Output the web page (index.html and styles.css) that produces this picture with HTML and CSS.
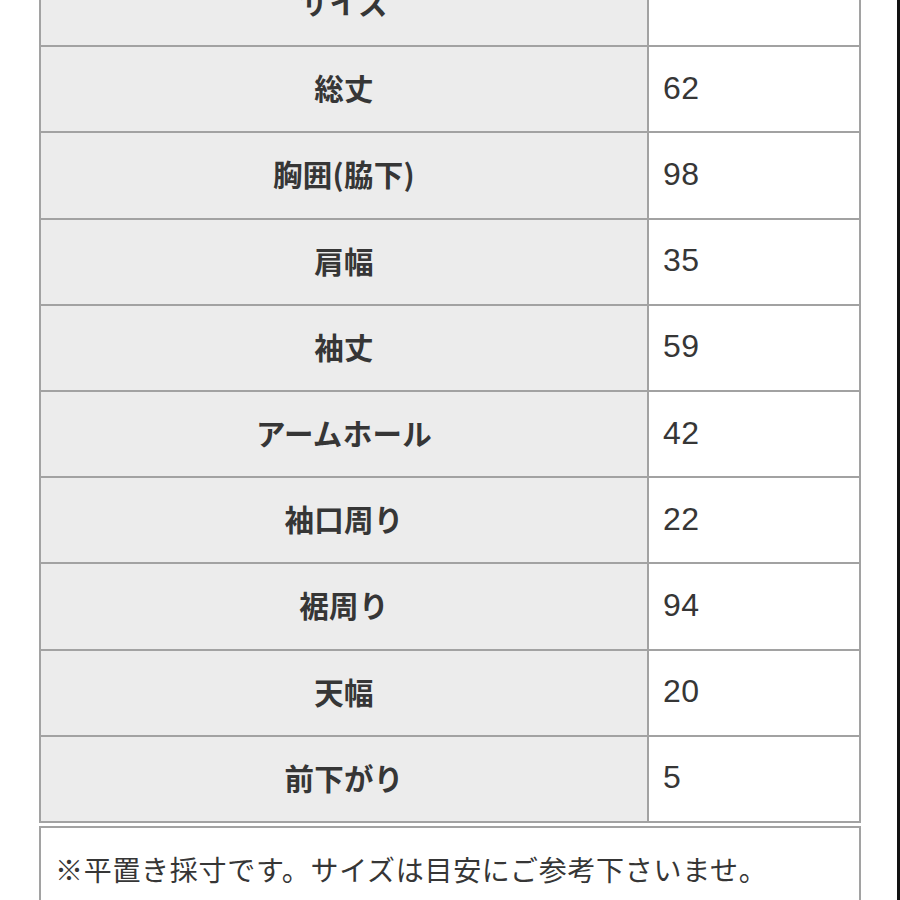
FILE: index.html
```html
<!DOCTYPE html>
<html lang="ja">
<head>
<meta charset="utf-8">
<link rel="stylesheet" href="styles.css">
</head>
<body>
<div class="page">
  <table class="size-table">
    <tr><th>サイズ</th><td></td></tr>
    <tr><th>総丈</th><td>62</td></tr>
    <tr><th>胸囲(脇下)</th><td>98</td></tr>
    <tr><th>肩幅</th><td>35</td></tr>
    <tr><th>袖丈</th><td>59</td></tr>
    <tr><th>アームホール</th><td>42</td></tr>
    <tr><th>袖口周り</th><td>22</td></tr>
    <tr><th>裾周り</th><td>94</td></tr>
    <tr><th>天幅</th><td>20</td></tr>
    <tr><th>前下がり</th><td>5</td></tr>
  </table>
  <div class="note">※平置き採寸です。サイズは目安にご参考下さいませ。</div>
</div>
</body>
</html>
```

FILE: styles.css
```css
html {
  margin: 0;
  padding: 0;
  height: 100%;
  background: linear-gradient(to right, #ffffff 0, #ffffff 897px, #111111 897px, #111111 100%);
}
body {
  margin: 0;
  padding: 0;
  height: 100%;
  overflow: hidden;
  background: transparent;
}
.page {
  display: flow-root;
  height: 900px;
  padding-left: 39px;
  overflow: hidden;
}
.size-table {
  border-collapse: collapse;
  width: 822px;
  margin-top: -41px;
  font-family: "Noto Sans CJK JP", "Noto Sans", sans-serif;
  color: #363636;
}
.size-table th,
.size-table td {
  border: 2px solid #a2a2a2;
  height: 84.2px;
  padding: 0 0 4px 0;
  box-sizing: border-box;
}
.size-table tr {
  height: 86.2px;
}
.size-table th {
  width: 608px;
  background: #ececec;
  font-weight: 700;
  font-size: 29.5px;
  letter-spacing: 0.3px;
  text-align: center;
}
.size-table td {
  background: #ffffff;
  text-align: left;
  padding-left: 14px;
  padding-bottom: 2px;
  font-family: "Liberation Sans", Arial, sans-serif;
  font-size: 32px;
  font-weight: 400;
  letter-spacing: 0.5px;
}
.note {
  margin-top: 3px;
  width: 822px;
  box-sizing: border-box;
  height: 100px;
  background: #ffffff;
  border: 2px solid #a2a2a2;
  padding: 21px 0 0 14px;
  font-family: "Noto Sans CJK JP", sans-serif;
  font-size: 28px;
  letter-spacing: 0.7px;
  color: #363636;
}
```
